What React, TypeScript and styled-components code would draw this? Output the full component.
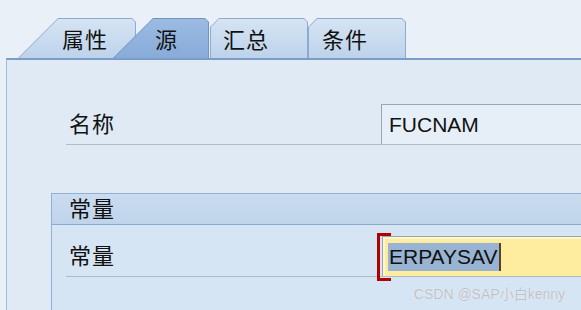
import React from "react"
import styled, { createGlobalStyle, css } from "styled-components"

const GlobalStyle = createGlobalStyle`
  html, body {
    margin: 0;
    padding: 0;
    background: #e9f0f8;
    overflow: hidden;
  }
`

const CJK = `"Noto Sans CJK SC", "Noto Sans", sans-serif`
const LATIN = `"Liberation Sans", Arial, "Noto Sans CJK SC", sans-serif`

const Screen = styled.div`
  width: 581px;
  height: 310px;
  overflow: hidden;
  position: relative;
  background: #e9f0f8;
  font-family: ${CJK};
  color: #111;
`

const TabStrip = styled.div`
  height: 58px;
  display: flex;
  align-items: flex-end;
  padding-left: 18px;
`

type TabShape = "slant" | "chamfer"

const shellClip = (shape: TabShape) =>
  shape === "slant"
    ? "polygon(0 100%, 40px 0, calc(100% - 4px) 0, 100% 4px, 100% 100%)"
    : "polygon(0 9px, 9px 0, calc(100% - 4px) 0, 100% 4px, 100% 100%, 0 100%)"

const faceClip = (shape: TabShape) =>
  shape === "slant"
    ? "polygon(0 100%, 39px 0, calc(100% - 3px) 0, 100% 3px, 100% 100%)"
    : "polygon(0 8px, 8px 0, calc(100% - 3px) 0, 100% 3px, 100% 100%, 0 100%)"

const TabShell = styled.div<{ $w: number; $shift: number; $shape: TabShape; $active?: boolean }>`
  position: relative;
  z-index: ${(p) => (p.$active ? 3 : 1)};
  width: ${(p) => p.$w}px;
  height: 40px;
  margin-left: ${(p) => p.$shift}px;
  padding: 1px 1px 0 1px;
  box-sizing: border-box;
  background: ${(p) => (p.$active ? "#6f93c2" : "#8eaad0")};
  clip-path: ${(p) => shellClip(p.$shape)};
  flex-shrink: 0;
`

const TabFace = styled.div<{ $shape: TabShape; $active?: boolean; $pad: number }>`
  height: 100%;
  display: flex;
  align-items: center;
  padding-left: ${(p) => p.$pad}px;
  padding-bottom: 2px;
  box-sizing: border-box;
  clip-path: ${(p) => faceClip(p.$shape)};
  font-size: 22px;
  line-height: 1;
  letter-spacing: 1px;
  ${(p) =>
    p.$active
      ? css`
          background: linear-gradient(#9bbbe2, #88abd8);
        `
      : css`
          background: linear-gradient(#d6e4f3, #bdd3eb);
        `}
`

const Panel = styled.div`
  margin-left: 6px;
  margin-right: -20px;
  height: 260px;
  border-top: 2px solid #7b9cc7;
  border-left: 1px solid #a2bddc;
  background: #dfeaf5;
  padding-top: 44px;
  box-sizing: border-box;
`

const FieldRow = styled.div<{ $indent: number }>`
  display: flex;
  align-items: stretch;
  height: 40px;
  margin-left: ${(p) => p.$indent}px;
  border-bottom: 1px solid #b5b9c0;
`

const Label = styled.div<{ $w: number }>`
  width: ${(p) => p.$w}px;
  flex-shrink: 0;
  display: flex;
  align-items: center;
  padding-left: 3px;
  padding-bottom: 4px;
  box-sizing: border-box;
  font-size: 22px;
  line-height: 1;
  letter-spacing: 1px;
`

const InputBox = styled.div<{ $focused?: boolean }>`
  position: relative;
  flex: 1;
  display: flex;
  align-items: center;
  padding-left: 7px;
  font-family: ${LATIN};
  font-size: 21px;
  border-top: 1px solid #9ea4ac;
  border-left: 1px solid #9ea4ac;
  ${(p) =>
    p.$focused
      ? css`
          padding-left: 5px;
          background: #ffed9f;
          box-shadow: inset 2px 2px 0 #fff6cf;
        `
      : css`
          background: #e6eef7;
        `}
`

const Selected = styled.span`
  display: inline-block;
  background: #99b4d2;
  line-height: 28px;
  height: 28px;
  padding: 0 1px;
`

const Caret = styled.span`
  display: inline-block;
  width: 2px;
  height: 28px;
  background: #5b4024;
`

const FocusBracket = styled.div`
  position: absolute;
  z-index: 2;
  left: -6px;
  top: -4px;
  bottom: -5px;
  width: 11px;
  border: 3px solid #b00000;
  border-right: none;
`

const GroupBox = styled.div`
  margin-top: 48px;
  margin-left: 44px;
  height: 120px;
  border: 1px solid #8fb0d7;
  border-right: none;
  background: #d6e5f3;
`

const GroupHeader = styled.div`
  height: 31px;
  display: flex;
  align-items: center;
  padding-left: 17px;
  padding-bottom: 4px;
  box-sizing: border-box;
  border-bottom: 1px solid #8caacf;
  background: linear-gradient(#cbdcef, #bfd4eb);
  font-size: 22px;
  line-height: 1;
  letter-spacing: 1px;
`

const GroupBody = styled.div`
  padding-top: 11px;
`

const Watermark = styled.div`
  position: absolute;
  right: 16px;
  bottom: 7px;
  font-family: ${LATIN};
  font-size: 14px;
  color: #bcc1c7;
  text-shadow: 0 0 1px #ffffff;
`

const tabs: { label: string; w: number; shift: number; shape: TabShape; pad: number; active?: boolean }[] = [
  { label: "属性", w: 118, shift: 0, shape: "slant", pad: 43 },
  { label: "源", w: 96, shift: -23, shape: "slant", pad: 41, active: true },
  { label: "汇总", w: 98, shift: 1, shape: "chamfer", pad: 12 },
  { label: "条件", w: 98, shift: 0, shape: "chamfer", pad: 13 },
]

export default function App() {
  return (
    <Screen>
      <GlobalStyle />
      <TabStrip>
        {tabs.map((t) => (
          <TabShell key={t.label} $w={t.w} $shift={t.shift} $shape={t.shape} $active={t.active}>
            <TabFace $shape={t.shape} $active={t.active} $pad={t.pad}>
              {t.label}
            </TabFace>
          </TabShell>
        ))}
      </TabStrip>
      <Panel>
        <FieldRow $indent={59}>
          <Label $w={315}>名称</Label>
          <InputBox>FUCNAM</InputBox>
        </FieldRow>
        <GroupBox>
          <GroupHeader>常量</GroupHeader>
          <GroupBody>
            <FieldRow $indent={14}>
              <Label $w={316}>常量</Label>
              <InputBox $focused>
                <FocusBracket />
                <Selected>ERPAYSAV</Selected>
                <Caret />
              </InputBox>
            </FieldRow>
          </GroupBody>
        </GroupBox>
      </Panel>
      <Watermark>CSDN @SAP小白kenny</Watermark>
    </Screen>
  )
}
